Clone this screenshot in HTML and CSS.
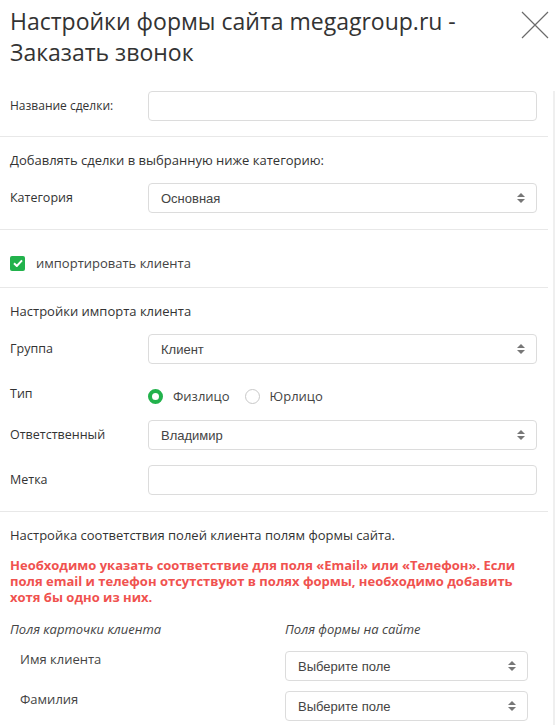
FILE: index.html
```html
<!DOCTYPE html>
<html lang="ru">
<head>
  <meta charset="UTF-8" />
  <meta name="viewport" content="width=device-width, initial-scale=1.0" />
  <title>Настройки формы сайта</title>
  <link rel="stylesheet" href="styles.css">
</head>
<body>
  <div class="modal">
    <div class="modal-head">
      <h1>Настройки формы сайта megagroup.ru - Заказать звонок</h1>
      <button class="close" aria-label="Закрыть">
        <svg width="28" height="28" viewBox="0 0 28 28"><path d="M1 1L27 27M27 1L1 27" stroke="#6b6b6b" stroke-width="1.2" fill="none"/></svg>
      </button>
    </div>

    <div class="modal-body">
      <div class="form">
        <section class="sec sec-first">
          <div class="row">
            <label class="lbl small">Название сделки:</label>
            <div class="ctl"><input class="field" type="text"></div>
          </div>
        </section>

        <section class="sec">
          <p class="note">Добавлять сделки в выбранную ниже категорию:</p>
          <div class="row gap">
            <label class="lbl">Категория</label>
            <div class="ctl"><div class="select">Основная<span class="arrows"></span></div></div>
          </div>
        </section>

        <section class="sec sec-check">
          <label class="check"><span class="box"><svg width="10" height="8" viewBox="0 0 10 8"><path d="M1 4.2L3.8 7L9 1.3" stroke="#fff" stroke-width="2" fill="none"/></svg></span>импортировать клиента</label>
        </section>

        <section class="sec">
          <p class="note">Настройки импорта клиента</p>
          <div class="row gap">
            <label class="lbl">Группа</label>
            <div class="ctl"><div class="select">Клиент<span class="arrows"></span></div></div>
          </div>
          <div class="row row-radio">
            <label class="lbl">Тип</label>
            <div class="ctl radios">
              <span class="radio on"></span><span class="rtext">Физлицо</span>
              <span class="radio"></span><span class="rtext">Юрлицо</span>
            </div>
          </div>
          <div class="row gap">
            <label class="lbl">Ответственный</label>
            <div class="ctl"><div class="select">Владимир<span class="arrows"></span></div></div>
          </div>
          <div class="row gap">
            <label class="lbl">Метка</label>
            <div class="ctl"><input class="field" type="text"></div>
          </div>
        </section>

        <section class="sec sec-map">
          <p class="note">Настройка соответствия полей клиента полям формы сайта.</p>
          <p class="warn">Необходимо указать соответствие для поля «Email» или «Телефон». Если поля email и телефон отсутствуют в полях формы, необходимо добавить хотя бы одно из них.</p>
          <div class="map-head">
            <span>Поля карточки клиента</span>
            <span>Поля формы на сайте</span>
          </div>
          <div class="map-row">
            <span class="map-lbl">Имя клиента</span>
            <div class="select">Выберите поле<span class="arrows"></span></div>
          </div>
          <div class="map-row">
            <span class="map-lbl">Фамилия</span>
            <div class="select">Выберите поле<span class="arrows"></span></div>
          </div>
        </section>
      </div>
      <div class="track"></div>
    </div>
  </div>
</body>
</html>
```

FILE: styles.css
```css
*{box-sizing:border-box;margin:0;padding:0}
body{font-family:'Open Sans',sans-serif;font-size:13px;color:#333;background:#fff;width:555px;overflow:hidden}
.modal{width:555px}
.modal-head{display:flex;align-items:flex-start;justify-content:space-between;padding:6px 6px 0 10px}
.modal-head h1{font-size:23px;font-weight:400;line-height:31px;color:#333;width:480px}
.close{background:none;border:none;margin-top:5px;cursor:pointer;display:block}
.close svg{display:block}

.modal-body{display:flex}
.form{width:548px}
.track{width:2px;margin-left:5px;margin-top:23px;background:#efefef}

.sec{border-top:1px solid #e8e8e8;padding:14px 11px 16px 10px}
.sec-first{border-top:none;padding-top:23px;padding-bottom:15px}
.sec-check{padding:23px 10px 14px}
.sec-map{padding-right:20px;padding-bottom:4px}

.row{display:flex;align-items:center}
.row.gap{margin-top:15px}
.note{line-height:18px;font-size:13px}
.sec > .note + .row.gap{margin-top:14px}
.lbl{width:138px;flex:none;font-size:12.5px;line-height:18px}
.lbl.small{font-size:12px}
.ctl{flex:1}

.field{display:block;width:100%;height:30px;border:1px solid #dcdcdc;border-radius:4px;background:#fff;outline:none}
.select{position:relative;height:30px;border:1px solid #dcdcdc;border-radius:4px;background:#fff;padding:0 30px 0 12px;display:flex;align-items:center;font-family:'Liberation Sans',Arial,sans-serif;font-size:13px;color:#444}
.arrows{position:absolute;right:11px;top:50%;width:8px;height:10px;margin-top:-5px}
.arrows::before,.arrows::after{content:"";position:absolute;left:0;border-left:4px solid transparent;border-right:4px solid transparent}
.arrows::before{top:0;border-bottom:4px solid #777}
.arrows::after{bottom:0;border-top:4px solid #777}

.check{display:flex;align-items:center;line-height:20px;font-size:13px;color:#444}
.box{width:15px;height:15px;border-radius:2px;background:#22b24c;display:flex;align-items:center;justify-content:center;margin-right:11px}

.row-radio{margin-top:21px;align-items:flex-start;height:20px}
.row-radio .lbl{line-height:18px}
.radios{display:flex;align-items:center;height:22px}
.radio{width:15px;height:15px;border-radius:50%;border:1px solid #c8c8c8;background:#fff;margin-right:10px;flex:none}
.radio.on{border:4px solid #22b24c}
.rtext{font-size:13px;color:#444;margin-right:15px}

.warn{margin-top:13px;color:#f0524f;font-weight:700;font-size:13px;line-height:16px}
.map-head{display:grid;grid-template-columns:275px 1fr;margin-top:15px;font-style:italic;line-height:18px;color:#444}
.map-row{display:grid;grid-template-columns:265px 1fr;padding-left:10px;margin-top:14px;align-items:start}
.map-head + .map-row{margin-top:13px}
.map-row + .map-row{margin-top:10px}
.map-lbl{line-height:16px;padding-top:0;color:#444}
```
